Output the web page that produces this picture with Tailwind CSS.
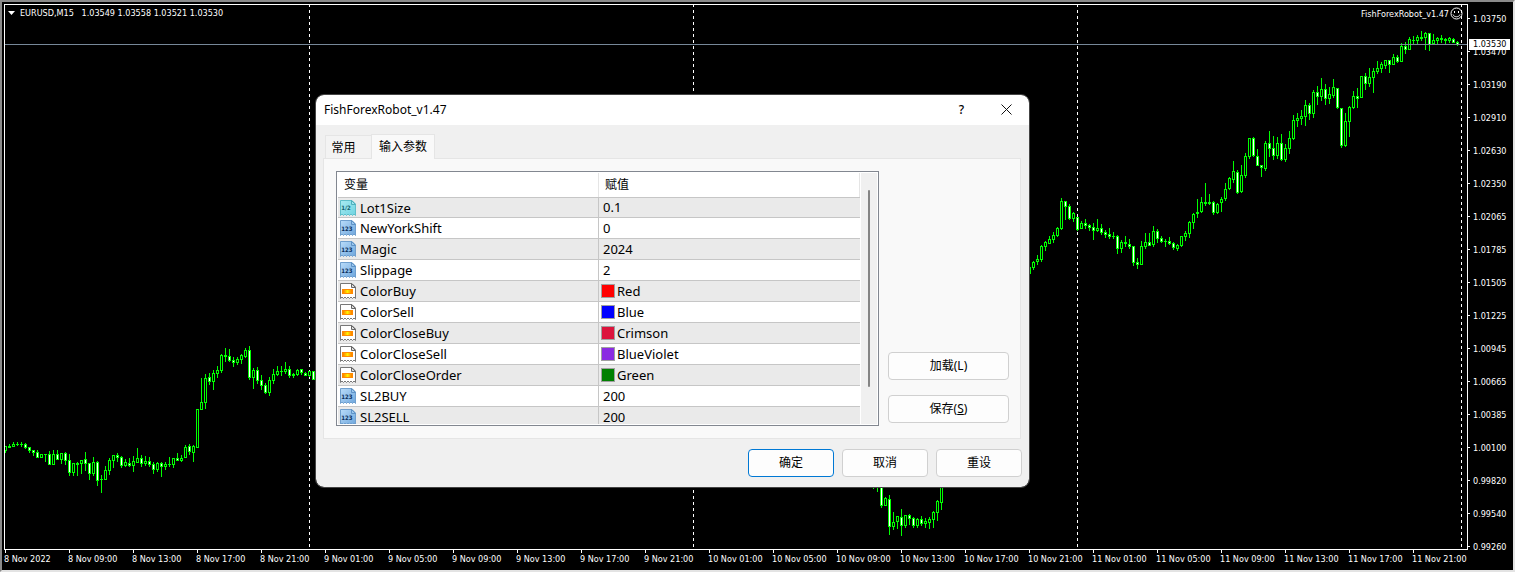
<!DOCTYPE html>
<html lang="zh-CN">
<head>
    <meta charset="UTF-8">
    <meta name="viewport" content="width=device-width, initial-scale=1.0">
    <title>EURUSD,M15</title>
    <script src="https://cdn.jsdelivr.net/npm/@tailwindcss/browser@4"></script>
</head>
<body class="relative h-screen overflow-hidden bg-black font-['Noto_Sans','Noto_Sans_CJK_SC',sans-serif]">
    <!-- Icon definitions -->
    <svg class="absolute h-0 w-0">
        <defs>
            <linearGradient id="blueFill" x1="0" y1="0" x2="1" y2="1">
                <stop offset="0" stop-color="#b9dcfa"></stop>
                <stop offset="1" stop-color="#6ea6dc"></stop>
            </linearGradient>
            <linearGradient id="tealFill" x1="0" y1="0" x2="1" y2="1">
                <stop offset="0" stop-color="#a9ecf2"></stop>
                <stop offset="1" stop-color="#6fd3e0"></stop>
            </linearGradient>
            <linearGradient id="sunFill" x1="0" y1="0" x2="1" y2="0">
                <stop offset="0" stop-color="#ff7a00"></stop>
                <stop offset="0.5" stop-color="#fff200"></stop>
                <stop offset="1" stop-color="#ff7a00"></stop>
            </linearGradient>
            <symbol id="iconInt" viewBox="0 0 16 16">
                <path d="M.5.5H12L15.5 4v11.5L14 14l-1.500 1.500L11 14l-1.500 1.500L8 14l-1.500 1.500L5 14l-1.500 1.500L2 14 .5 15.5z" fill="url(#blueFill)" stroke="#6f9fce"></path>
                <path d="M11.5.5v4h4z" fill="#9cc8f0" stroke="#5f93c6"></path>
                <text x="7" y="11" text-anchor="middle" font-family="DejaVu Sans Condensed" font-size="6" font-weight="bold" fill="#0b2f5c">123</text>
            </symbol>
            <symbol id="iconDouble" viewBox="0 0 16 16">
                <path d="M.5.5H12L15.5 4v11.5L14 14l-1.500 1.500L11 14l-1.500 1.500L8 14l-1.500 1.500L5 14l-1.500 1.500L2 14 .5 15.5z" fill="url(#tealFill)" stroke="#5fbfca"></path>
                <path d="M11.5.5v4h4z" fill="#9fe6ee" stroke="#4fb0bc"></path>
                <text x="6" y="10" text-anchor="middle" font-family="DejaVu Sans Condensed" font-size="6" font-weight="bold" fill="#12606c">1/2</text>
            </symbol>
            <symbol id="iconColor" viewBox="0 0 16 16">
                <path d="M.5.5H12L15.5 4v11.5L14 14l-1.500 1.500L11 14l-1.500 1.500L8 14l-1.500 1.500L5 14l-1.500 1.500L2 14 .5 15.5z" fill="#fff" stroke="#777"></path>
                <path d="M11.5.5v4h4z" fill="#ddd" stroke="#666"></path>
                <rect x="2" y="6" width="11" height="5" fill="#ff8a00"></rect>
                <rect x="3" y="7" width="9" height="3" fill="url(#sunFill)"></rect>
            </symbol>
        </defs>
    </svg>

    <!-- Chart window -->
    <main class="flex h-full border-2 border-t-[#8a8a8a] border-l-[#8a8a8a] border-r-[#e3e3e3] border-b-[#e3e3e3] bg-black text-white font-['DejaVu_Sans_Condensed','DejaVu_Sans',sans-serif] text-[9px] leading-3">
        <div class="flex min-w-0 flex-1 flex-col pl-0.5 pt-0.5">
            <div class="relative min-h-0 flex-1 border border-white">
                <svg id="chart" class="block h-full w-full" viewBox="5 5 1462 544" preserveAspectRatio="none" shape-rendering="crispEdges">
                    <g stroke="#fff" stroke-dasharray="3 3">
                        <path d="M309.500 4V549"></path>
                        <path d="M693.500 4V549"></path>
                        <path d="M1077.500 4V549"></path>
                        <path d="M1461.500 4V549"></path>
                    </g>
                    <g id="candles"></g>
                    <path d="M5 44.500H1467" stroke="#778899"></path>
                </svg>
                <div class="absolute left-0.5 top-0.5 flex items-center gap-1">
                    <svg class="h-3 w-[9px]" viewBox="0 0 9 12"><path d="M1 4h7L4.500 8z" fill="#fff"></path></svg>
                    <span class="whitespace-pre">EURUSD,M15   1.03549 1.03558 1.03521 1.03530</span>
                </div>
                <div class="absolute right-1 top-0.5 flex items-center gap-px">
                    <span>FishForexRobot_v1.47</span>
                    <svg class="h-[13px] w-[13px]" viewBox="0 0 13 13" fill="none" stroke="#fff">
                        <circle cx="6.500" cy="6.500" r="5.500"></circle>
                        <path d="M4.500 4v2M8.500 4v2M3 7.500c1 3 6 3 7 0"></path>
                    </svg>
                </div>
            </div>
            <!-- Time axis -->
            <div id="timeAxis" class="flex h-5 shrink-0"></div>
        </div>

        <!-- Price axis -->
        <div class="relative w-[45px] shrink-0 overflow-hidden">
            <div id="priceAxis"></div>
            <div class="absolute left-px top-[37px] w-[41px] bg-white pl-1 leading-[11px] text-black">1.03530</div>
        </div>
    </main>

    <!-- Expert properties dialog -->
    <section role="dialog" aria-labelledby="dialogTitle" class="absolute left-[316px] top-[95px] w-[713px] overflow-hidden rounded-lg bg-[#f0f0f0] text-[12px] leading-4 text-black outline outline-[#444]">
        <header class="flex h-[30px] items-center bg-white pl-2">
            <h2 id="dialogTitle" class="flex-1">FishForexRobot_v1.47</h2>
            <button aria-label="帮助" class="h-full w-[45px] font-medium">?</button>
            <button aria-label="关闭" class="flex h-full w-[45px] items-center justify-center pb-px">
                <svg class="h-[11px] w-[11px]" viewBox="0 0 11 11"><path d="M.5.5l10 10M10.500.5l-10 10" stroke="#111"></path></svg>
            </button>
        </header>

        <div class="px-2 pb-[10px] pt-[9px]">
            <!-- Tabs -->
            <div role="tablist" class="relative z-10 -mb-px flex items-end pl-px">
                <button role="tab" aria-selected="false" class="mb-px h-[23px] w-[46px] border border-b-0 border-r-0 border-[#e5e5e5] bg-[#f3f3f3] pr-2.5 pt-px">常用</button>
                <button role="tab" aria-selected="true" class="h-[25px] w-16 border border-b-0 border-[#e5e5e5] bg-[#f9f9f9]">输入参数</button>
            </div>

            <div class="-ml-px flex gap-[9px] border border-[#e5e5e5] bg-[#f9f9f9] py-3 pl-3 pr-[11px]">
                <!-- Inputs list -->
                <div class="flex h-[255px] flex-1 border border-[#828790] bg-white p-px">
                    <div class="flex-1 overflow-hidden">
                        <table class="w-full table-fixed border-separate border-spacing-0 text-left">
                            <thead>
                                <tr>
                                    <th class="h-6 w-1/2 border-r border-[#e5e5e5] p-0 pl-1.5 font-normal">变量</th>
                                    <th class="h-6 border-r border-[#e5e5e5] p-0 pl-1.5 font-normal">赋值</th>
                                </tr>
                            </thead>
                            <tbody id="inputs"></tbody>
                        </table>
                    </div>
                    <div class="ml-px flex w-4 justify-center bg-[#f0f0f0] pb-[37px] pt-[17px]">
                        <div class="w-0.5 rounded-full bg-[#858585]"></div>
                    </div>
                </div>
                <div class="flex w-[121px] flex-col justify-end gap-[15px] pb-[3px]">
                    <button class="h-7 rounded border border-[#d0d0d0] bg-[#fdfdfd]">加载(L)</button>
                    <button class="h-7 rounded border border-[#d0d0d0] bg-[#fdfdfd]">保存(<u>S</u>)</button>
                </div>
            </div>

            <!-- Footer buttons -->
            <div class="-mr-px flex justify-end gap-2 pt-[10px]">
                <button class="h-7 w-[86px] rounded border border-[#0078d4] bg-[#fdfdfd]">确定</button>
                <button class="h-7 w-[86px] rounded border border-[#d0d0d0] bg-[#fdfdfd]">取消</button>
                <button class="h-7 w-[86px] rounded border border-[#d0d0d0] bg-[#fdfdfd]">重设</button>
            </div>
        </div>
    </section>

    <script>
        // Each candle is [high, top, bottom, low, falling]; one candle per 4px
        const series = [
            { x: 5, candles: [
                [446,446,450,452],[444,446,447,447],[442,444,446,446],[442,444,444,445],[442,444,444,446],[443,444,447,448,1],
                [447,447,450,452,1],[450,450,452,455,1],[450,452,457,457,1],[454,454,457,457],[454,454,454,461],[451,454,464,464,1],
                [450,454,464,464],[450,454,459,459,1],[453,453,459,463],[452,453,460,464,1],[454,460,472,475,1],[463,463,472,475],
                [462,463,464,475],[460,460,463,473],[452,459,463,470,1],[463,463,473,479,1],[457,462,473,475],[461,462,480,485,1],
                [475,479,479,492],[466,470,479,479],[458,460,470,474],[455,455,460,467],[453,455,457,461,1],[456,457,465,467,1],
                [459,462,465,466],[458,463,465,466,1],[456,461,465,471],[448,458,462,462],[455,458,463,466,1],[456,461,463,465],
                [457,461,464,466,1],[462,464,469,473,1],[462,463,469,471],[462,463,466,476,1],[462,464,466,469],[457,464,464,466],
                [458,458,464,467],[453,458,460,460,1],[455,458,460,461],[445,447,457,457],[444,446,451,454,1],[445,446,452,461],
                [409,409,447,447],[378,402,409,409],[374,378,402,408],[373,377,381,384,1],[370,373,381,389],[366,370,373,377],
                [354,355,370,372],[348,355,356,361],[349,356,360,361,1],[357,360,362,366,1],[357,359,362,364],[354,355,359,363],
                [348,350,356,357],[346,350,377,379,1],[368,370,377,388],[367,370,380,383,1],[375,380,385,389,1],[383,385,392,393,1],
                [377,380,392,395],[369,374,380,383],[366,371,374,375],[366,371,371,375],[362,369,371,373],[366,369,375,377,1],
                [373,374,375,377],[369,370,374,375],[369,369,372,374,1],[372,373,375,375,1],[371,371,375,376],[371,371,379,379,1]
            ] },
            { x: 873, candles: [
                [480,480,484,488],[480,480,484,491],[480,480,505,507,1],[497,498,505,505],[495,499,526,534,1],[512,522,526,529],
                [516,516,521,528],[509,517,525,535,1],[515,515,525,527],[514,515,518,524,1],[517,518,525,527,1],[518,519,525,527],
                [516,519,523,525,1],[518,521,523,527],[517,519,522,528],[511,512,519,527],[500,501,512,520],[480,480,502,509]
            ] },
            { x: 1029, candles: [
                [267,267,273,274],[261,262,267,269],[255,259,261,264],[245,246,259,261],[241,242,246,250],[236,239,243,243],
                [232,235,239,242],[227,228,235,236],[198,201,228,229],[201,201,206,219,1],[204,206,218,219,1],[212,213,218,221],
                [217,217,229,230,1],[221,223,228,228],[219,223,225,228,1],[224,225,227,230,1],[223,227,230,239,1],[219,228,230,231],
                [224,228,232,234,1],[230,232,234,237,1],[228,234,236,238,1],[232,236,236,238],[235,236,248,253,1],[240,242,248,252],
                [236,242,243,246],[239,244,246,248,1],[246,246,262,265,1],[258,262,264,268,1],[241,246,264,264],[233,242,246,248],
                [233,242,245,245,1],[226,231,244,246],[229,231,238,242,1],[236,238,241,242,1],[239,241,241,246],[237,241,243,244,1],
                [242,243,247,249,1],[244,245,248,250],[236,236,245,246],[231,233,236,240],[221,222,233,237],[213,214,222,228],
                [199,212,213,217],[197,202,211,212],[183,202,203,205],[194,202,203,204,1],[201,202,212,214,1],[203,204,212,213],
                [197,199,202,211],[183,189,198,200],[177,178,188,189],[161,171,179,182],[170,172,192,193,1],[165,175,191,192],
                [153,156,175,177],[138,138,156,158],[137,138,155,156,1],[149,156,165,165,1],[165,165,167,176,1],[141,143,168,170],
                [131,143,148,156,1],[136,148,155,159,1],[137,143,155,158],[134,143,159,160,1],[144,148,159,161],[131,138,148,153],
                [115,120,138,139],[113,118,120,126],[110,116,118,124],[100,105,116,125],[103,105,113,119,1],[90,92,113,117],
                [86,92,96,104,1],[78,89,96,100],[84,89,98,104,1],[87,94,98,103],[79,87,95,97],[88,88,107,108,1],
                [108,108,145,147,1],[113,121,145,146],[106,107,121,136],[91,96,107,108],[88,96,98,107,1],[76,76,97,97],
                [73,76,83,89,1],[68,77,83,86],[68,71,77,92],[61,68,71,73],[62,64,68,72],[60,60,65,68],
                [60,60,64,72,1],[54,57,64,64],[55,57,61,62,1],[43,46,61,61],[42,46,49,53,1],[37,39,49,49],
                [36,40,40,44],[35,37,40,44],[31,37,38,40],[32,33,37,49],[33,33,44,50,1],[34,40,43,44],
                [37,38,40,44],[35,38,39,42],[38,39,40,43,1],[37,38,40,42],[38,39,42,42,1],[41,42,44,45,1]
            ] }
        ];

        function rect(x, y, w, h, fill) {
            return h > 0 ? `<rect x="${x}" y="${y}" width="${w}" height="${h}" fill="${fill}"/>` : '';
        }

        document.getElementById('candles').innerHTML = series.map(({ x, candles }) =>
            candles.map(([high, top, bottom, low, falling], i) => {
                const cx = x + i * 4;
                return rect(cx, high, 1, low - high + 1, '#0f0') +
                    rect(cx - 1, top, 3, bottom - top + 1, '#0f0') +
                    rect(cx, top + 1, 1, bottom - top - 1, falling ? '#fff' : '#000');
            }).join('')
        ).join('');

        // Time axis, one label per 64px
        const times = ['8 Nov 2022', '8 Nov 09:00', '8 Nov 13:00', '8 Nov 17:00', '8 Nov 21:00'];
        ['9', '10', '11'].forEach(day => {
            ['01', '05', '09', '13', '17', '21'].forEach(hour => times.push(`${day} Nov ${hour}:00`));
        });
        document.getElementById('timeAxis').innerHTML = times.map(time => `
            <div class="w-16 shrink-0 whitespace-nowrap">
                <div class="ml-px h-[3px] w-px bg-white"></div>
                <span class="block">${time}</span>
            </div>
        `).join('');

        // Price axis, one label per 33px
        const prices = [
            '1.03750', '1.03470', '1.03190', '1.02910', '1.02630', '1.02350', '1.02065', '1.01785', '1.01505',
            '1.01225', '1.00945', '1.00665', '1.00385', '1.00100', '0.99820', '0.99540', '0.99260'
        ];
        document.getElementById('priceAxis').innerHTML = prices.map(price => `
            <div class="flex h-[33px] items-center gap-[3px]">
                <div class="h-px w-0.5 bg-white"></div>
                <span>${price}</span>
            </div>
        `).join('');

        // Inputs list
        const inputs = [
            { name: 'Lot1Size', value: '0.1', icon: 'iconDouble' },
            { name: 'NewYorkShift', value: '0', icon: 'iconInt' },
            { name: 'Magic', value: '2024', icon: 'iconInt' },
            { name: 'Slippage', value: '2', icon: 'iconInt' },
            { name: 'ColorBuy', value: 'Red', icon: 'iconColor' },
            { name: 'ColorSell', value: 'Blue', icon: 'iconColor' },
            { name: 'ColorCloseBuy', value: 'Crimson', icon: 'iconColor' },
            { name: 'ColorCloseSell', value: 'BlueViolet', icon: 'iconColor' },
            { name: 'ColorCloseOrder', value: 'Green', icon: 'iconColor' },
            { name: 'SL2BUY', value: '200', icon: 'iconInt' },
            { name: 'SL2SELL', value: '200', icon: 'iconInt' }
        ];
        document.getElementById('inputs').innerHTML = inputs.map(({ name, value, icon }) => `
            <tr class="text-[13px] leading-[14px] odd:bg-[#eaeaea] first:*:border-t">
                <td class="h-[21px] border-b border-r border-[#c6c6c6] p-0 pl-0.5">
                    <div class="flex items-center gap-1">
                        <svg class="h-4 w-4 shrink-0"><use href="#${icon}"></use></svg>
                        <span>${name}</span>
                    </div>
                </td>
                <td class="h-[21px] border-b border-[#c6c6c6] p-0 pb-px ${icon === 'iconColor' ? 'pl-0.5' : 'pl-1'}">
                    <div class="flex items-center gap-0.5">
                        ${icon === 'iconColor' ? `<span class="h-3.5 w-3.5 border border-[#a0a0a0]" style="background:${value}"></span>` : ''}
                        <span>${value}</span>
                    </div>
                </td>
            </tr>
        `).join('');
    </script>
</body>
</html>
